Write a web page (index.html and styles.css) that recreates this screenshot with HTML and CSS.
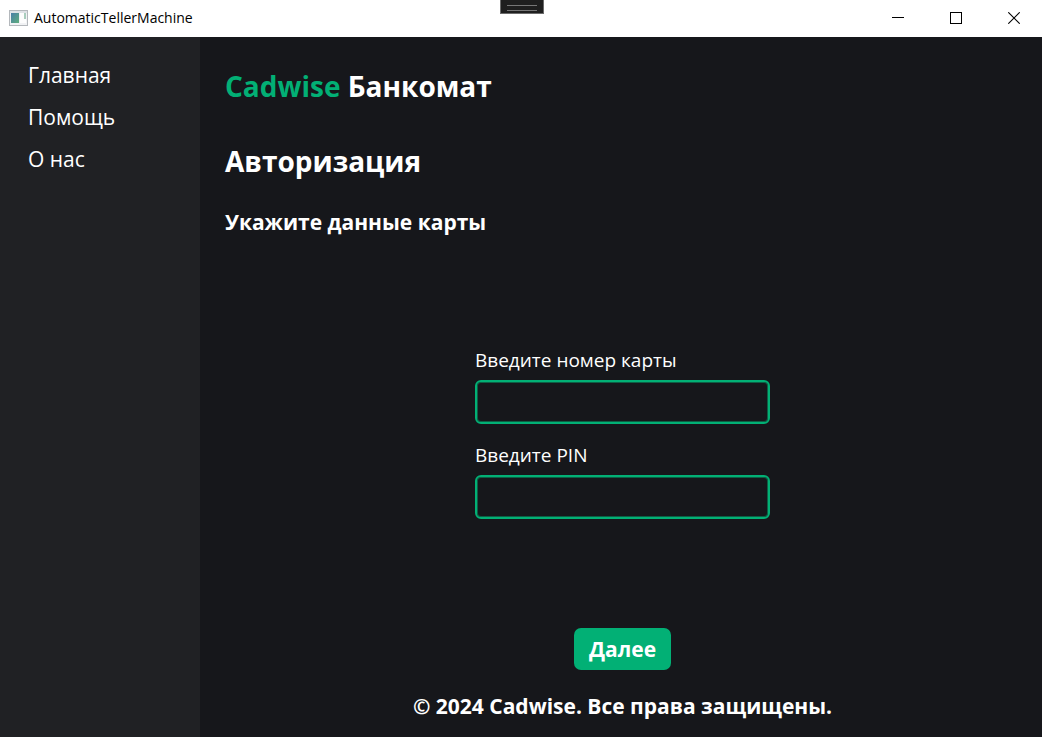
FILE: index.html
```html
<!DOCTYPE html>
<html lang="ru">
<head>
<meta charset="utf-8">
<meta name="viewport" content="width=device-width, initial-scale=1">
<title>AutomaticTellerMachine</title>
<link rel="stylesheet" href="styles.css">
</head>
<body>
<div class="window">
  <header class="titlebar">
    <svg class="app-icon" width="19" height="16" viewBox="0 0 19 16" aria-hidden="true">
      <defs>
        <linearGradient id="screen" x1="0" y1="0" x2="1" y2="1">
          <stop offset="0" stop-color="#4a7fa8"/>
          <stop offset="1" stop-color="#5fae7d"/>
        </linearGradient>
      </defs>
      <rect x="0.5" y="0.5" width="18" height="15" fill="#f1f2f4" stroke="#b4b8bc"/>
      <rect x="1" y="1" width="17" height="2" fill="#dfe2e6"/>
      <rect x="2" y="3" width="8" height="10" fill="url(#screen)"/>
      <rect x="11" y="3" width="6" height="10" fill="#fdfdfd"/>
      <rect x="15" y="3" width="2" height="6" fill="#a9cdbd"/>
    </svg>
    <span class="app-name">AutomaticTellerMachine</span>
    <div class="debug-handle" aria-hidden="true"></div>
    <div class="window-buttons">
      <button class="window-button" type="button" aria-label="Свернуть">
        <svg width="12" height="12" viewBox="0 0 12 12"><path d="M0 5.500H12" stroke="#000" fill="none"/></svg>
      </button>
      <button class="window-button" type="button" aria-label="Развернуть">
        <svg width="12" height="12" viewBox="0 0 12 12"><rect x="0.500" y="0.500" width="11" height="11" stroke="#000" fill="none"/></svg>
      </button>
      <button class="window-button" type="button" aria-label="Закрыть">
        <svg width="12" height="12" viewBox="0 0 12 12"><path d="M0.300 0.300L11.700 11.700M11.700 0.300L0.300 11.700" stroke="#000" stroke-width="1.100" fill="none"/></svg>
      </button>
    </div>
  </header>
  <div class="body">
    <nav class="sidebar">
      <a class="nav-link" href="#home">Главная</a>
      <a class="nav-link" href="#help">Помощь</a>
      <a class="nav-link" href="#about">О нас</a>
    </nav>
    <main class="content">
      <h1 class="brand"><span class="brand-accent">Cadwise</span> Банкомат</h1>
      <h2 class="page-title">Авторизация</h2>
      <h3 class="subtitle">Укажите данные карты</h3>
      <form class="card-form">
        <div class="fields">
          <label class="field-label" for="card">Введите номер карты</label>
          <input class="field-input" id="card" type="text">
          <label class="field-label" for="pin">Введите PIN</label>
          <input class="field-input" id="pin" type="password">
        </div>
        <button class="next-button" type="button">Далее</button>
      </form>
      <footer class="copyright">© 2024 Cadwise. Все права защищены.</footer>
    </main>
  </div>
</div>
</body>
</html>
```
FILE: styles.css
```css
* {
  box-sizing: border-box;
}

body {
  margin: 0;
  background: #16171b;
  color: #fff;
  font-family: "Open Sans", "Noto Sans", sans-serif;
}

.window {
  display: flex;
  flex-direction: column;
  min-height: 100vh;
}

.titlebar {
  position: relative;
  display: flex;
  align-items: center;
  height: 37px;
  padding: 0 0 2px 9px;
  background: #fff;
  color: #000;
}

.app-name {
  margin-left: 6px;
  font-size: 14px;
  line-height: 20px;
}

.debug-handle {
  position: absolute;
  top: 0;
  left: 50%;
  width: 44px;
  height: 14px;
  margin-left: -21px;
  border: 1px solid #6b6b6b;
  border-top: 0;
  background: #1f1f1f;
}

.debug-handle::before {
  content: "";
  display: block;
  height: 4px;
  margin: 5px 6px 0;
  border: solid #777;
  border-width: 1px 0;
}

.window-buttons {
  display: flex;
  height: 100%;
  margin-left: auto;
}

.window-button {
  display: flex;
  align-items: center;
  justify-content: center;
  width: 58px;
  padding: 0 0 0 2px;
  border: 0;
  background: none;
}

.body {
  display: flex;
  flex: 1;
}

.sidebar {
  display: flex;
  flex-direction: column;
  gap: 12px;
  width: 200px;
  padding: 23px 28px;
  background: #202124;
}

.nav-link {
  color: #fff;
  font-size: 21px;
  line-height: 30px;
  text-decoration: none;
}

.content {
  display: flex;
  flex: 1;
  flex-direction: column;
  padding: 29px 22px 16px 25px;
}

.brand,
.page-title,
.subtitle {
  margin: 0;
  font-weight: 700;
}

.brand,
.page-title {
  font-size: 28px;
  line-height: 40px;
}

.brand-accent {
  color: #02b075;
}

.page-title {
  margin-top: 35px;
}

.subtitle {
  margin-top: 26px;
  font-size: 21px;
  line-height: 30px;
}

.card-form {
  display: flex;
  flex: 1;
  flex-direction: column;
  align-items: center;
  justify-content: flex-end;
  padding-top: 40px;
}

.fields {
  display: flex;
  flex-direction: column;
  width: 295px;
}

.field-label {
  margin-bottom: 7px;
  font-size: 19px;
  line-height: 26px;
}

.field-input {
  height: 44px;
  margin-bottom: 18px;
  padding: 0 10px;
  border: 2px solid #02b075;
  border-radius: 6px;
  background: transparent;
  box-shadow: inset 0 0 0 1px #0d5f45;
  color: #fff;
  font: inherit;
  font-size: 19px;
}

.next-button {
  height: 42px;
  margin-top: 91px;
  padding: 0 15px;
  border: 0;
  border-radius: 7px;
  background: #02b075;
  color: #fff;
  font: inherit;
  font-size: 21px;
  font-weight: 700;
}

.copyright {
  margin-top: 21px;
  font-size: 21px;
  font-weight: 700;
  line-height: 30px;
  text-align: center;
}
```
